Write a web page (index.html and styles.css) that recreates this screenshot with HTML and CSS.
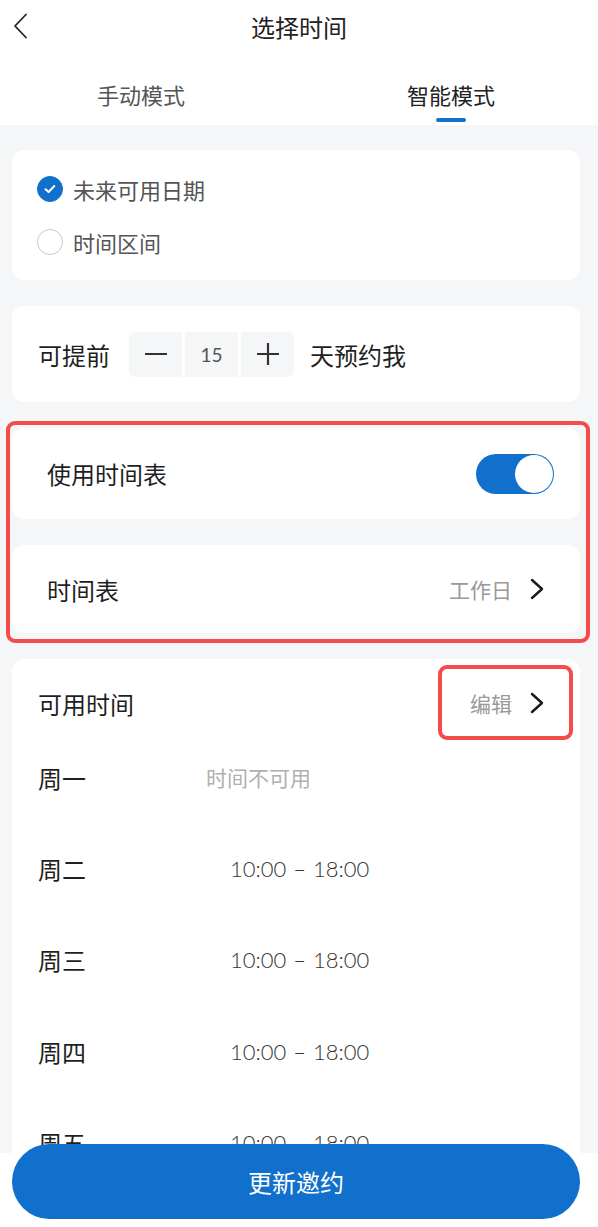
FILE: index.html
```html
<!DOCTYPE html>
<html lang="zh-CN">
<head>
  <meta charset="UTF-8" />
  <meta name="viewport" content="width=device-width, initial-scale=1.0"/>
  <title>选择时间</title>
  <link rel="stylesheet" href="styles.css">
</head>
<body>

  <header class="page-header">
    <div class="topbar">
      <button class="back-btn" aria-label="返回">
        <svg width="16" height="26" viewBox="0 0 16 26"><path d="M13 1.5 L2 13 L13 24.5" fill="none" stroke="#222" stroke-width="1.8" stroke-linecap="round" stroke-linejoin="round"/></svg>
      </button>
      <h1 class="title">选择时间</h1>
    </div>
    <nav class="tabs">
      <div class="tab">手动模式</div>
      <div class="tab active">智能模式</div>
    </nav>
  </header>

  <main class="content">

    <section class="card options">
      <label class="option">
        <span class="radio checked">
          <svg width="14" height="14" viewBox="0 0 14 14"><path d="M2.5 7.2 L5.6 10 L11.3 4" fill="none" stroke="#fff" stroke-width="2" stroke-linecap="round" stroke-linejoin="round"/></svg>
        </span>
        未来可用日期
      </label>
      <label class="option">
        <span class="radio"></span>
        时间区间
      </label>
    </section>

    <section class="card advance">
      <span class="label">可提前</span>
      <div class="stepper">
        <button class="step-btn" aria-label="减少">
          <svg width="24" height="24" viewBox="0 0 24 24"><path d="M1 12 H23" stroke="#333" stroke-width="2.2"/></svg>
        </button>
        <span class="step-value">15</span>
        <button class="step-btn" aria-label="增加">
          <svg width="24" height="24" viewBox="0 0 24 24"><path d="M1 12 H23 M12 1 V23" stroke="#333" stroke-width="2.2"/></svg>
        </button>
      </div>
      <span class="label">天预约我</span>
    </section>

    <div class="highlight-group">
      <section class="card row-card">
        <span class="label">使用时间表</span>
        <span class="switch on"><span class="knob"></span></span>
      </section>

      <section class="card row-card short">
        <span class="label">时间表</span>
        <span class="link">工作日
          <svg class="chevron" width="14" height="22" viewBox="0 0 14 22"><path d="M2 2 L12 11 L2 20" fill="none" stroke="#1a1a1a" stroke-width="2.4" stroke-linecap="round" stroke-linejoin="round"/></svg>
        </span>
      </section>
    </div>

    <section class="card schedule">
      <div class="schedule-head">
        <span class="label">可用时间</span>
        <span class="link edit">编辑
          <svg class="chevron" width="14" height="22" viewBox="0 0 14 22"><path d="M2 2 L12 11 L2 20" fill="none" stroke="#1a1a1a" stroke-width="2.4" stroke-linecap="round" stroke-linejoin="round"/></svg>
        </span>
      </div>
      <ul class="days">
        <li><span class="day">周一</span><span class="unavailable">时间不可用</span></li>
        <li><span class="day">周二</span><span class="time">10:00 – 18:00</span></li>
        <li><span class="day">周三</span><span class="time">10:00 – 18:00</span></li>
        <li><span class="day">周四</span><span class="time">10:00 – 18:00</span></li>
        <li><span class="day">周五</span><span class="time">10:00 – 18:00</span></li>
      </ul>
    </section>

  </main>

  <footer class="footer">
    <button class="submit">更新邀约</button>
  </footer>

</body>
</html>
```

FILE: styles.css
```css
* {
  box-sizing: border-box;
  margin: 0;
  padding: 0;
}

body {
  font-family: "Noto Sans CJK SC", "Noto Sans", sans-serif;
  background-color: #f5f6f8;
  color: #1f1f1f;
  width: 598px;
  height: 1227px;
  overflow: hidden;
}

button {
  font-family: inherit;
  border: none;
  background: none;
  cursor: pointer;
}

/* ヘッダー */
.page-header {
  background: #fff;
}

.topbar {
  position: relative;
  height: 56px;
  display: flex;
  align-items: center;
  justify-content: center;
}

.back-btn {
  position: absolute;
  left: 13px;
  top: 13px;
  display: flex;
}

.title {
  font-size: 24px;
  font-weight: 400;
  color: #222;
  margin: 0 0 4px 0;
}

.tabs {
  height: 69px;
  display: flex;
  justify-content: space-between;
  padding: 25px 103px 0 97px;
}

.tab {
  font-size: 22px;
  line-height: 26px;
  color: #555;
  display: flex;
  flex-direction: column;
  align-items: center;
}

.tab.active {
  color: #222;
}

.tab.active::after {
  content: '';
  width: 30px;
  height: 4px;
  margin-top: 11px;
  border-radius: 2px;
  background: #1170cb;
}

/* カード */
.content {
  padding: 25px 18px 0 12px;
  display: flex;
  flex-direction: column;
  gap: 26px;
}

.card {
  background: #fff;
  border-radius: 12px;
}

.label {
  font-size: 24px;
  color: #1f1f1f;
}

.options {
  padding: 25px 25px 24px;
  display: flex;
  flex-direction: column;
  gap: 25px;
}

.option {
  display: flex;
  align-items: center;
  gap: 10px;
  height: 28px;
  font-size: 22px;
  color: #555;
}

.radio {
  width: 26px;
  height: 26px;
  border-radius: 50%;
  border: 1px solid #c8c8c8;
  display: flex;
  align-items: center;
  justify-content: center;
}

.radio.checked {
  background: #1170cb;
  border-color: #1170cb;
}

.advance {
  height: 96px;
  display: flex;
  align-items: center;
  padding: 0 26px;
}

.stepper {
  display: flex;
  gap: 3px;
  margin: 0 16px 0 19px;
  border-radius: 6px;
  overflow: hidden;
}

.step-btn,
.step-value {
  width: 53px;
  height: 45px;
  background: #f5f6f8;
  display: flex;
  align-items: center;
  justify-content: center;
}

.step-value {
  font-family: "Lato", "Noto Sans", sans-serif;
  font-size: 19px;
  color: #555;
}

/* 赤枠のグループ */
.highlight-group {
  position: relative;
  display: flex;
  flex-direction: column;
  gap: 26px;
}

.highlight-group::after,
.edit::after {
  content: '';
  position: absolute;
  border: 4px solid #f44b4b;
  border-radius: 9px;
  pointer-events: none;
}

.highlight-group::after {
  top: -7px;
  bottom: -10px;
  left: -6px;
  right: -10px;
}

.row-card {
  height: 91px;
  display: flex;
  align-items: center;
  justify-content: space-between;
  padding: 0 26px 0 35px;
}

.row-card.short {
  height: 88px;
  padding-right: 36px;
}

.switch {
  width: 78px;
  height: 40px;
  border-radius: 20px;
  background: #1170cb;
  display: flex;
  align-items: center;
  justify-content: flex-end;
  padding: 1px;
}

.knob {
  width: 38px;
  height: 38px;
  border-radius: 50%;
  background: #fff;
}

.link {
  position: relative;
  display: flex;
  align-items: center;
  gap: 18px;
  font-size: 21px;
  color: #999;
}

/* 可用时间 */
.schedule {
  padding: 27px 26px 0 26px;
  min-height: 700px;
}

.schedule-head {
  display: flex;
  justify-content: space-between;
  align-items: center;
  height: 34px;
}

.edit {
  margin-right: 10px;
}

.edit::after {
  top: -23px;
  bottom: -22px;
  left: -32px;
  right: -29px;
}

.days {
  list-style: none;
  margin-top: 32px;
}

.days li {
  display: flex;
  align-items: center;
  height: 91.3px;
  padding-bottom: 41px;
}

.day {
  width: 168px;
  font-size: 24px;
  color: #1f1f1f;
}

.unavailable {
  font-size: 21px;
  color: #b0b0b0;
}

.time {
  margin-left: 24px;
  font-family: "Lato", "Noto Sans", sans-serif;
  font-weight: 300;
  font-size: 22px;
  color: #333;
  word-spacing: 1px;
}

/* 下部ボタン */
.footer {
  position: fixed;
  left: 0;
  right: 0;
  bottom: 0;
  height: 74px;
  background: #fff;
  padding: 0 18px 0 12px;
}

.submit {
  width: 100%;
  height: 75px;
  margin-top: -9px;
  border-radius: 38px;
  background: #1170cb;
  color: #fff;
  font-size: 24px;
}
```
